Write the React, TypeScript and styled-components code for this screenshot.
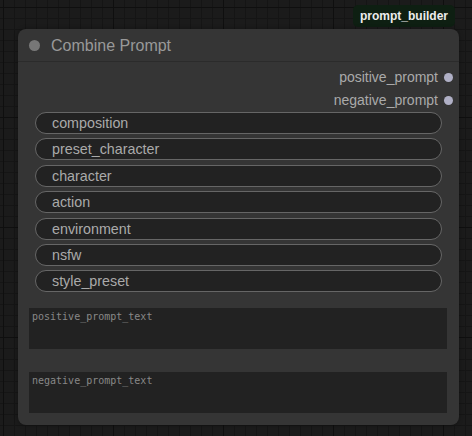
import styled, { createGlobalStyle } from 'styled-components';

const GlobalStyle = createGlobalStyle`
  html, body {
    margin: 0;
    padding: 0;
  }
  body {
    width: 472px;
    height: 436px;
    overflow: hidden;
    font-family: "Liberation Sans", Arial, sans-serif;
  }
`;

const Canvas = styled.div`
  width: 472px;
  height: 436px;
  box-sizing: border-box;
  padding: 5px 0 0 18px;
  background-color: #1b1b1b;
  background-image:
    linear-gradient(to right, #0f0f0f 1px, transparent 1px),
    linear-gradient(to bottom, #0f0f0f 1px, transparent 1px),
    linear-gradient(to right, #151515 1px, transparent 1px),
    linear-gradient(to bottom, #151515 1px, transparent 1px);
  background-size: 110px 110px, 110px 110px, 11px 11px, 11px 11px;
  background-position: 3px 0, 0 7px, 3px 0, 0 7px;
`;

const NodeWrap = styled.div`
  width: 441px;
  display: flex;
  flex-direction: column;
`;

const BadgeRow = styled.div`
  display: flex;
  justify-content: flex-end;
  padding-right: 4px;
  height: 24px;
`;

const Badge = styled.div`
  height: 22px;
  padding: 0 7px;
  border-radius: 5px;
  background: #0e1f12;
  color: #ececec;
  font-size: 12px;
  font-weight: 700;
  display: flex;
  align-items: center;
`;

const Node = styled.div`
  height: 396px;
  background: #353535;
  border-radius: 8px;
  box-shadow: 0 0 4px rgba(0, 0, 0, 0.35);
  display: flex;
  flex-direction: column;
  overflow: hidden;
`;

const Title = styled.div`
  height: 33px;
  box-sizing: border-box;
  padding: 1px 0 0 11px;
  border-bottom: 1px solid #2b2b2b;
  display: flex;
  align-items: center;
  gap: 11px;
  color: #999;
  font-size: 16px;
`;

const Dot = styled.span<{ $color: string; $size: number }>`
  width: ${(p) => p.$size}px;
  height: ${(p) => p.$size}px;
  border-radius: 50%;
  background: ${(p) => p.$color};
  flex-shrink: 0;
`;

const Body = styled.div`
  display: flex;
  flex-direction: column;
  padding: 4px 0 0;
`;

const OutputRow = styled.div<{ $first?: boolean }>`
  height: 22px;
  display: flex;
  align-items: center;
  justify-content: flex-end;
  gap: 6px;
  padding-right: 6px;
  color: #aaa;
  font-size: 14px;
  margin-top: ${(p) => (p.$first ? 0 : 1)}px;
`;

const Widgets = styled.div`
  display: flex;
  flex-direction: column;
  gap: 4.4px;
  margin: 1px 17px 0;
`;

const Pill = styled.div`
  height: 22px;
  box-sizing: border-box;
  border: 1px solid #666;
  border-radius: 11px;
  background: #222;
  color: #aaa;
  font-size: 14.3px;
  display: flex;
  align-items: center;
  padding-left: 16px;
`;

const TextArea = styled.div<{ $top: number }>`
  height: 41px;
  margin: ${(p) => p.$top}px 12px 0 11px;
  background: #222;
  color: #888;
  font-family: "DejaVu Sans Mono", "Liberation Mono", monospace;
  font-size: 10px;
  padding: 3px 3px;
  box-sizing: border-box;
`;

const widgets = [
  'composition',
  'preset_character',
  'character',
  'action',
  'environment',
  'nsfw',
  'style_preset',
];

export default function App() {
  return (
    <>
      <GlobalStyle />
      <Canvas>
        <NodeWrap>
          <BadgeRow>
            <Badge>prompt_builder</Badge>
          </BadgeRow>
          <Node>
            <Title>
              <Dot $color="#777" $size={11} />
              Combine Prompt
            </Title>
            <Body>
              <OutputRow $first>
                positive_prompt
                <Dot $color="#b0b0c6" $size={9} />
              </OutputRow>
              <OutputRow>
                negative_prompt
                <Dot $color="#b0b0c6" $size={9} />
              </OutputRow>
              <Widgets>
                {widgets.map((w) => (
                  <Pill key={w}>{w}</Pill>
                ))}
              </Widgets>
              <TextArea $top={15.6}>positive_prompt_text</TextArea>
              <TextArea $top={23}>negative_prompt_text</TextArea>
            </Body>
          </Node>
        </NodeWrap>
      </Canvas>
    </>
  );
}
